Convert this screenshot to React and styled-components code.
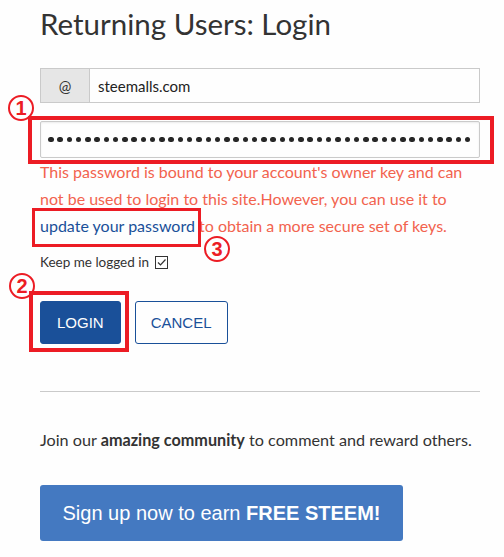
import React from 'react'
import styled, { createGlobalStyle } from 'styled-components'

const GlobalStyle = createGlobalStyle`
  html, body {
    margin: 0;
    padding: 0;
    background: #fefefe;
  }
  body {
    font-family: 'Lato', 'Open Sans', sans-serif;
    color: #333;
  }
`

const Page = styled.div`
  width: 440px;
  padding: 0 24px 0 40px;
`

const Title = styled.h1`
  margin: 0;
  padding-top: 4px;
  font-size: 29.5px;
  line-height: 40px;
  font-weight: 400;
  color: #333;
`

const Form = styled.form`
  margin-top: 24px;
  display: flex;
  flex-direction: column;
`

const InputGroup = styled.div`
  display: flex;
  height: 35px;
  border: 1px solid #cacaca;
  box-sizing: border-box;
`

const Addon = styled.span`
  width: 48px;
  flex: none;
  display: flex;
  align-items: center;
  justify-content: center;
  background: #e6e6e6;
  border-right: 1px solid #cacaca;
  font-size: 15px;
  color: #333;
`

const Field = styled.input`
  flex: 1;
  min-width: 0;
  border: none;
  outline: none;
  padding: 0 8px;
  font-family: inherit;
  font-size: 15px;
  color: #222;
  background: #fefefe;
`

const Annotated = styled.div`
  position: relative;
  margin-top: ${p => p.$mt || 0}px;
  display: ${p => (p.$inline ? 'inline-block' : 'block')};
`

const Frame = styled.span`
  position: absolute;
  top: ${p => p.$t}px;
  left: ${p => p.$l}px;
  right: ${p => p.$r}px;
  bottom: ${p => p.$b}px;
  border: ${p => p.$w || 4}px solid #ec1c24;
  pointer-events: none;
`

const Marker = styled.span`
  position: absolute;
  top: ${p => p.$t}px;
  left: ${p => p.$l}px;
  width: 22px;
  height: 22px;
  border: 2px solid #ec1c24;
  border-radius: 50%;
  display: flex;
  align-items: center;
  justify-content: center;
  font-family: 'Liberation Sans', Arial, sans-serif;
  font-weight: 700;
  font-size: 20px;
  line-height: 1;
  color: #ec1c24;
`

const PasswordBox = styled.div`
  height: 37px;
  border: 1px solid #cacaca;
  border-radius: 2px;
  box-shadow: inset 0 1px 2px rgba(0, 0, 0, 0.08);
  display: flex;
  align-items: center;
  padding: 0 7px;
  overflow: hidden;
  box-sizing: border-box;
`

const Dots = styled.span`
  display: flex;
  gap: 3.77px;
`

const Dot = styled.i`
  width: 5.5px;
  height: 5.5px;
  border-radius: 50%;
  background: #262626;
  flex: none;
`

const ErrorText = styled.p`
  margin: 0;
  font-size: 16px;
  line-height: 27px;
  color: #f2634e;
`

const Link = styled.a`
  color: #1a5099;
  text-decoration: none;
`

const Keep = styled.label`
  margin-top: 15px;
  font-size: 13.5px;
  color: #333;
  display: flex;
  align-items: center;
  gap: 6px;
`

const Actions = styled.div`
  margin-top: 31px;
  display: flex;
  gap: 14px;
`

const Button = styled.button`
  height: 43px;
  padding: 0 ${p => p.$px}px;
  border-radius: 3px;
  font-family: 'Liberation Sans', Arial, sans-serif;
  font-size: 15px;
  border: 1px solid #1a5099;
  background: ${p => (p.$primary ? '#1a5099' : '#fefefe')};
  color: ${p => (p.$primary ? '#fefefe' : '#1a5099')};
  cursor: pointer;
`

const Rule = styled.hr`
  margin: 47px 0 0;
  border: none;
  border-top: 1px solid #cacaca;
`

const Join = styled.p`
  margin: 38px 0 0;
  font-size: 16.2px;
  line-height: 20px;
  color: #333;
`

const SignUp = styled.button`
  margin-top: 35px;
  width: 363px;
  height: 56px;
  border: none;
  border-radius: 3px;
  background: #4479c1;
  color: #fff;
  font-family: 'Liberation Sans', Arial, sans-serif;
  font-size: 20px;
  cursor: pointer;
`

const CheckIcon = () => (
  <svg width="13" height="13" viewBox="0 0 13 13" fill="none" stroke="#333" strokeWidth="1">
    <rect x="0.5" y="0.5" width="12" height="12" />
    <path d="M3 6.5 L5.5 9 L10.5 3.5" strokeWidth="1.2" />
  </svg>
)

const App = () => {
  return (
    <Page>
      <GlobalStyle />
      <Title>Returning Users: Login</Title>
      <Form onSubmit={e => e.preventDefault()}>
        <InputGroup>
          <Addon>@</Addon>
          <Field defaultValue="steemalls.com" />
        </InputGroup>

        <Annotated $mt={18}>
          <PasswordBox>
            <Dots>
              {Array.from({ length: 46 }, (_, i) => <Dot key={i} />)}
            </Dots>
          </PasswordBox>
          <Marker $l={-32} $t={-26}>1</Marker>
          <Frame $t={-5} $l={-12} $r={-14} $b={-6} $w={4} />
        </Annotated>

        <ErrorText>
          This password is bound to your account's owner key and can not be
          used to login to this site.However, you can use it to{' '}
          <Annotated as="span" $inline>
            <Link href="#">update your password</Link>
            <Marker $l={164} $t={24}>3</Marker>
            <Frame $t={-4} $l={-8} $r={-6} $b={-8} $w={3} />
          </Annotated>{' '}
          to obtain a more secure set of keys.
        </ErrorText>

        <Keep>
          Keep me logged in <CheckIcon />
        </Keep>

        <Actions>
          <Annotated>
            <Button $primary $px={16} type="submit">LOGIN</Button>
            <Marker $l={-31} $t={-28}>2</Marker>
            <Frame $t={-10} $l={-11} $r={-8} $b={-8} $w={4} />
          </Annotated>
          <Button $px={15} type="button">CANCEL</Button>
        </Actions>
      </Form>

      <Rule />
      <Join>
        Join our <strong>amazing community</strong> to comment and reward others.
      </Join>
      <SignUp>
        Sign up now to earn <strong>FREE STEEM!</strong>
      </SignUp>
    </Page>
  )
}

export default App
